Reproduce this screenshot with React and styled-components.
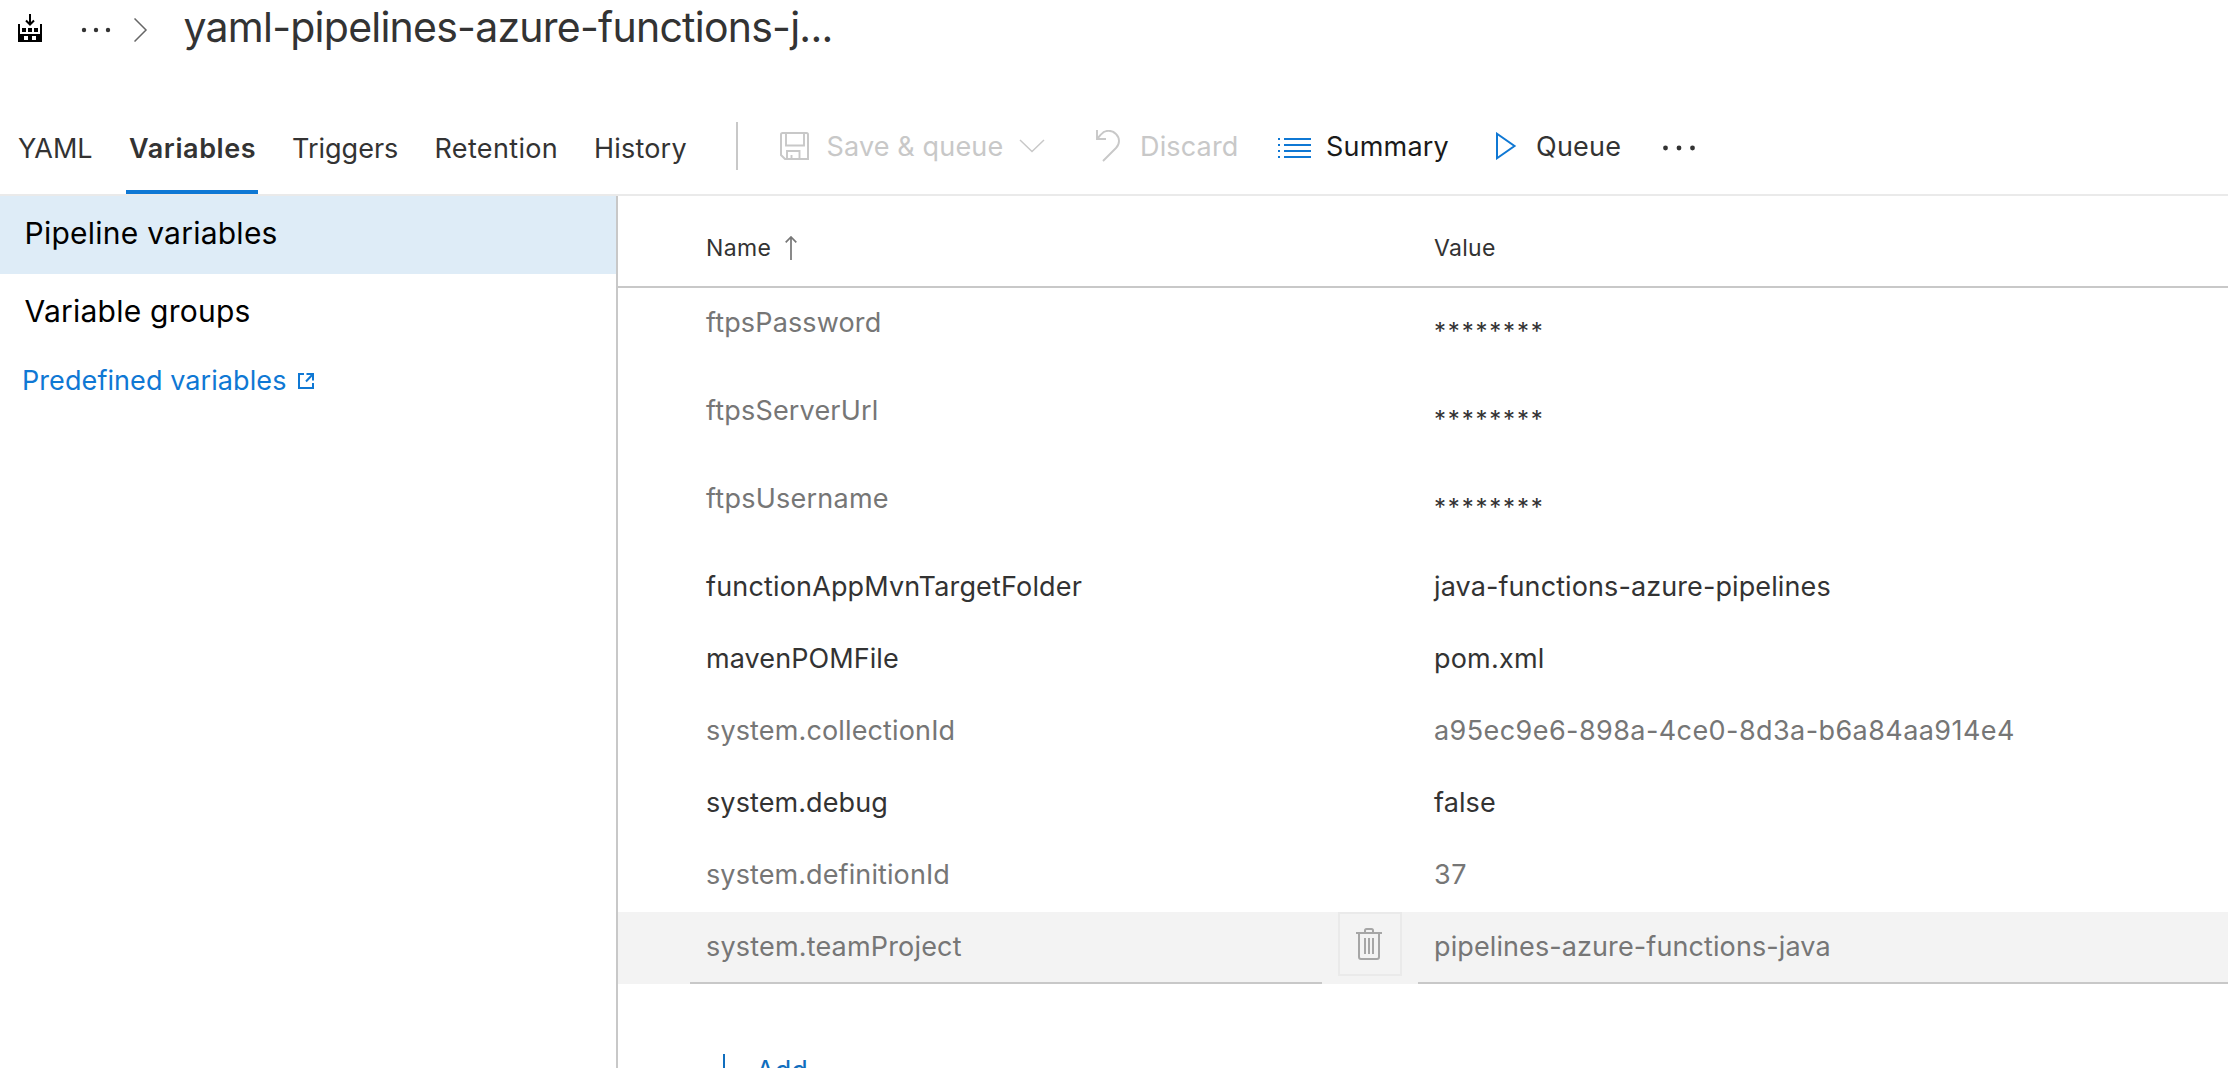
import React from "react";
import styled, { createGlobalStyle } from "styled-components";

const GlobalStyle = createGlobalStyle`
  * { box-sizing: border-box; }
  html, body { margin: 0; padding: 0; background: #fff; }
  body {
    font-family: Inter, "Liberation Sans", sans-serif;
    font-size: 27px;
    color: #333;
    overflow: hidden;
  }
`;

const Page = styled.div`
  display: flex;
  flex-direction: column;
  height: 1068px;
  overflow: hidden;
`;

const Icon = styled.svg`
  display: block;
  flex: none;
  width: ${(p) => p.$w}px;
  height: ${(p) => p.$h}px;
  margin-left: ${(p) => p.$left || 0}px;
  margin-top: ${(p) => p.$top || 0}px;
  fill: none;
  stroke: currentColor;
  color: ${(p) => p.$color || "inherit"};
`;

const Label = styled.span`
  flex: none;
  width: ${(p) => (p.$w ? `${p.$w}px` : "auto")};
  margin-left: ${(p) => p.$left || 0}px;
  letter-spacing: ${(p) => p.$ls || 0}px;
  white-space: pre;
`;

const Breadcrumb = styled.header`
  display: flex;
  align-items: flex-start;
  height: 102px;
  padding-left: 18px;
`;

const Title = styled.h1`
  margin: 0 0 0 35.5px;
  font-size: 41px;
  font-weight: 400;
  line-height: 54px;
  letter-spacing: -0.76px;
  white-space: nowrap;
`;

const Toolbar = styled.div`
  display: flex;
  height: 94px;
  border-bottom: 2px solid #eaeaea;
`;

const Tabs = styled.nav`
  display: flex;
  gap: 31px;
  width: 736px;
  padding-left: 15px;
`;

const Tab = styled.a`
  display: block;
  height: 92px;
  padding: 0 3px;
  border-top: 4px solid transparent;
  border-bottom: 4px solid ${(p) => (p.$active ? "#0f78d4" : "transparent")};
  line-height: 86px;
  font-weight: ${(p) => (p.$active ? 600 : 400)};
  width: ${(p) => p.$w}px;
  letter-spacing: ${(p) => p.$ls || 0}px;
  white-space: nowrap;
`;

const Commands = styled.div`
  display: flex;
  align-items: center;
  height: 88px;
`;

const Divider = styled.div`
  width: 2px;
  height: 48px;
  background: #c8c8c8;
`;

const Command = styled.button`
  display: flex;
  align-items: center;
  width: ${(p) => p.$w}px;
  margin-left: ${(p) => p.$left || 0}px;
  padding: 0;
  border: 0;
  background: none;
  font: inherit;
  line-height: 36px;
  text-align: left;
  color: ${(p) => p.$color || "#333"};

  ${Label} {
    padding-top: 2px;
  }
`;

const Main = styled.div`
  display: flex;
  flex: 1;
  min-height: 0;
`;

const Sidebar = styled.aside`
  width: 618px;
  flex: none;
  border-right: 2px solid #c8c8c8;
`;

const SideItem = styled.div`
  height: 78px;
  padding-left: 24.5px;
  font-size: 30px;
  line-height: 74px;
  color: #000;
  letter-spacing: 0.24px;
  background: ${(p) => (p.$active ? "#deecf7" : "transparent")};
`;

const SideLink = styled.a`
  display: flex;
  align-items: center;
  padding-left: 22px;
  line-height: 56px;
  color: #0f78d4;

  ${Label} {
    padding-top: 1px;
  }
`;

const Table = styled.section`
  flex: 1;
  min-width: 0;
`;

const HeadRow = styled.div`
  display: flex;
  height: 92px;
  padding-left: 72px;
  border-bottom: 2px solid #c8c8c8;
  font-size: 23px;
  line-height: 103px;
`;

const HeadCell = styled.div`
  display: flex;
  align-items: center;
  height: 104px;
  width: ${(p) => p.$w}px;
  padding-left: 16px;
`;

const Row = styled.div`
  display: flex;
  height: ${(p) => (p.$tall ? 88 : 72)}px;
  padding-left: 72px;
  line-height: 70px;
  color: ${(p) => (p.$muted ? "#767676" : "#333")};
  background: ${(p) => (p.$hover ? "#f3f3f3" : "transparent")};
`;

const Cell = styled.div`
  display: flex;
  width: ${(p) => (p.$name ? "632px" : "auto")};
  flex: ${(p) => (p.$name ? "none" : "1")};
  padding-left: 16px;
  border-bottom: 2px solid ${(p) => (p.$hover ? "#c8c8c8" : "transparent")};
`;

const ActionCell = styled.div`
  display: flex;
  justify-content: center;
  width: 96px;
  flex: none;
`;

const DeleteButton = styled.button`
  display: flex;
  align-items: center;
  justify-content: center;
  width: 64px;
  height: 64px;
  padding: 0 2px 0 0;
  border: 2px solid #eaeaea;
  background: none;
  color: #a6a6a6;
`;

const Secret = styled.span`
  color: #333;
  font-size: 24px;
  line-height: 87px;
  letter-spacing: 1.8px;
`;

const AddRow = styled.button`
  display: flex;
  align-items: center;
  height: 36px;
  margin: 68px 0 0 90px;
  padding: 0;
  border: 0;
  background: none;
  font: inherit;
  color: #106ebe;
`;

const rows = [
  { name: "ftpsPassword", nameLs: 0.14, secret: true },
  { name: "ftpsServerUrl", nameLs: 0.18, secret: true },
  { name: "ftpsUsername", nameLs: 0.25, secret: true },
  {
    name: "functionAppMvnTargetFolder",
    nameLs: 0.16,
    value: "java-functions-azure-pipelines",
    valueLs: 0.1,
  },
  { name: "mavenPOMFile", nameLs: 0.08, value: "pom.xml", valueLs: 0.2 },
  {
    name: "system.collectionId",
    nameLs: 0.14,
    value: "a95ec9e6-898a-4ce0-8d3a-b6a84aa914e4",
    valueLs: 0.42,
    muted: true,
  },
  { name: "system.debug", nameLs: 0.1, value: "false", valueLs: 0.1 },
  { name: "system.definitionId", nameLs: 0.1, value: "37", valueLs: 0.5, muted: true },
  {
    name: "system.teamProject",
    nameLs: 0.18,
    value: "pipelines-azure-functions-java",
    valueLs: 0.1,
    muted: true,
    hover: true,
  },
];

const BuildIcon = () => (
  <Icon $w={24} $h={28} $top={14} viewBox="0 0 24 28" $color="#000">
    <path d="M12 0v11M8 6.500l4 4 4-4" strokeWidth="2" />
    <path
      d="M0 10h2v10h20V10h2v18H0zM6 22v4h4v-4zM14 22v4h4v-4z"
      fill="currentColor"
      fillRule="evenodd"
      stroke="none"
    />
    <path d="M4 14h4v4H4zM10 14h4v4h-4zM16 14h4v4h-4z" fill="currentColor" stroke="none" />
  </Icon>
);

const SaveIcon = () => (
  <Icon $w={30} $h={28} viewBox="0 0 30 28">
    <path d="M2 1h24.500q1.500 0 1.500 1.500V27H5l-4-4V2.500Q1 1 2.500 1z" strokeWidth="2" />
    <path d="M6 1v12.500h18V1M7 27v-8h12.500v8M11.500 23v4" strokeWidth="1.900" />
  </Icon>
);

const UndoIcon = () => (
  <Icon $w={26} $h={32} viewBox="0 0 26 32">
    <path d="M2 0v9h9M2 9 6 4.500C10-.5 17-.2 21 4c4 4 4 10 0 14L8 31" strokeWidth="1.900" />
  </Icon>
);

const TrashIcon = () => (
  <Icon $w={26} $h={32} viewBox="0 0 26 32">
    <path
      d="M0 5h26M9 5V2.500Q9 1 10.500 1h5Q17 1 17 2.500V5M3 5v24q0 2 2 2h16q2 0 2-2V5M9 10v16M13 10v16M17 10v16"
      strokeWidth="2"
    />
  </Icon>
);

export default function App() {
  return (
    <>
      <GlobalStyle />
      <Page>
        <Breadcrumb>
          <BuildIcon />
          <Icon $w={30} $h={6} $left={39} $top={27} viewBox="0 0 30 6">
            <g fill="currentColor" stroke="none">
              <circle cx="3" cy="3" r="2.200" />
              <circle cx="15" cy="3" r="2.200" />
              <circle cx="27" cy="3" r="2.200" />
            </g>
          </Icon>
          <Icon $w={14} $h={24} $left={23} $top={18} viewBox="0 0 14 24" $color="#666">
            <path d="m.5.5 11.500 11.500L.5 23.500" strokeWidth="1.500" />
          </Icon>
          <Title>yaml-pipelines-azure-functions-j...</Title>
        </Breadcrumb>

        <Toolbar>
          <Tabs>
            <Tab $w={80}>YAML</Tab>
            <Tab $w={132} $active $ls={0.6}>
              Variables
            </Tab>
            <Tab $w={111.5}>Triggers</Tab>
            <Tab $w={128.5} $ls={0.35}>
              Retention
            </Tab>
            <Tab $w={110} $ls={0.2}>
              History
            </Tab>
          </Tabs>
          <Commands>
            <Divider />
            <Command $w={315} $left={42} $color="#c8c8c8">
              <SaveIcon />
              <Label $left={16.5} $w={192.5} $ls={0.15}>
                Save &amp; queue
              </Label>
              <Icon $w={26} $h={14} viewBox="0 0 26 14">
                <path d="m1 1 12 11.500L25 1" strokeWidth="1.500" />
              </Icon>
            </Command>
            <Command $w={183} $color="#c8c8c8">
              <UndoIcon />
              <Label $left={19} $ls={0.15}>
                Discard
              </Label>
            </Command>
            <Command $w={218} $color="#1a1a1a">
              <Icon $w={33} $h={20} $top={4} viewBox="0 0 33 20" $color="#0f78d4">
                <path
                  d="M0 1h2M6 1h27M0 7h2M6 7h27M0 13h2M6 13h27M0 19h2M6 19h27"
                  strokeWidth="2"
                />
              </Icon>
              <Label $left={15} $ls={0.2}>
                Summary
              </Label>
            </Command>
            <Command $w={167}>
              <Icon $w={22} $h={28} viewBox="0 0 22 28" $color="#0f78d4">
                <path d="M1 1.800v24.400L18.500 14z" strokeWidth="2" />
              </Icon>
              <Label $left={18} $ls={0.25}>
                Queue
              </Label>
            </Command>
            <Icon $w={34} $h={6} $top={4} viewBox="0 0 34 6">
              <g fill="currentColor" stroke="none">
                <circle cx="2.500" cy="3" r="2.400" />
                <circle cx="16" cy="3" r="2.400" />
                <circle cx="29.500" cy="3" r="2.400" />
              </g>
            </Icon>
          </Commands>
        </Toolbar>

        <Main>
          <Sidebar>
            <SideItem $active>Pipeline variables</SideItem>
            <SideItem>Variable groups</SideItem>
            <SideLink>
              <Label $w={276} $ls={0.08}>
                Predefined variables
              </Label>
              <Icon $w={16} $h={16} viewBox="0 0 16 16">
                <path d="M6 1H1v14h14v-5M8.500 1H15v6.500M15 1 8 8.500" strokeWidth="2" />
              </Icon>
            </SideLink>
          </Sidebar>
          <Table>
            <HeadRow>
              <HeadCell $w={728}>
                <Label $w={79} $ls={0.4}>
                  Name
                </Label>
                <Icon $w={12} $h={24} viewBox="0 0 12 24" $color="#767676">
                  <path d="M6 24V1M.7 6.300 6 1l5.300 5.300" strokeWidth="1.700" />
                </Icon>
              </HeadCell>
              <HeadCell $w={400}>
                <Label $ls={0.3}>Value</Label>
              </HeadCell>
            </HeadRow>
            {rows.map((r) => (
              <Row key={r.name} $tall={r.secret} $muted={r.secret || r.muted} $hover={r.hover}>
                <Cell $name $hover={r.hover}>
                  <Label $ls={r.nameLs}>{r.name}</Label>
                </Cell>
                <ActionCell>
                  {r.hover && (
                    <DeleteButton>
                      <TrashIcon />
                    </DeleteButton>
                  )}
                </ActionCell>
                <Cell $hover={r.hover}>
                  {r.secret ? <Secret>********</Secret> : <Label $ls={r.valueLs}>{r.value}</Label>}
                </Cell>
              </Row>
            ))}
            <AddRow>
              <Icon $w={32} $h={32} viewBox="0 0 32 32">
                <path d="M16 0v32M0 16h32" strokeWidth="2" />
              </Icon>
              <Label $left={16}>Add</Label>
            </AddRow>
          </Table>
        </Main>
      </Page>
    </>
  );
}
